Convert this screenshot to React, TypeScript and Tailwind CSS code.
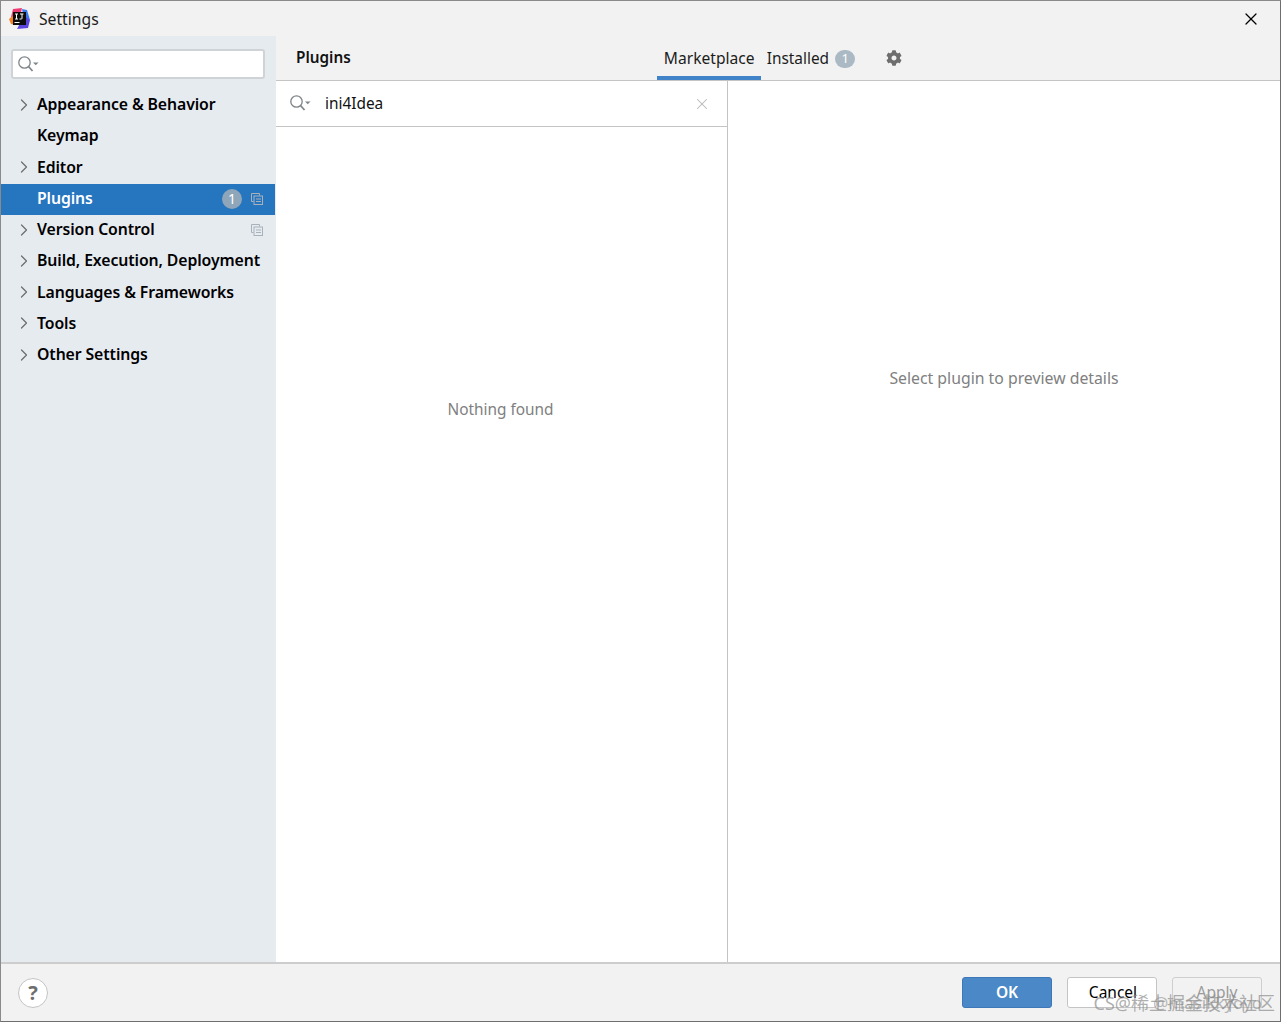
import React from "react";
import { ChevronRight, X } from "lucide-react";
import { FaCog } from "react-icons/fa";

const FONT = { fontFamily: '"Noto Sans", "Noto Sans CJK SC", sans-serif' };

const rows = [
  { label: "Appearance & Behavior", arrow: true },
  { label: "Keymap" },
  { label: "Editor", arrow: true },
  { label: "Plugins", selected: true, badge: true, copy: true },
  { label: "Version Control", arrow: true, copy: true },
  { label: "Build, Execution, Deployment", arrow: true },
  { label: "Languages & Frameworks", arrow: true },
  { label: "Tools", arrow: true },
  { label: "Other Settings", arrow: true },
];

function SearchIcon() {
  return (
    <svg width="21" height="17" viewBox="0 0 21 17" fill="none" className="shrink-0">
      <circle cx="6.5" cy="6.5" r="5.7" stroke="#7f8589" strokeWidth="1.3" />
      <path d="M10.500 10.500L14.500 15" stroke="#7f8589" strokeWidth="1.8" />
      <path d="M15 6.500h5.500l-2.750 2.750z" fill="#7f8589" />
    </svg>
  );
}

function CopyIcon() {
  return (
    <svg width="12" height="12" viewBox="0 0 12 12" fill="none" className="shrink-0">
      <path d="M8.500 2.500V0.500H0.500V8.500H2.500" stroke="#a9b2b9" strokeWidth="1" />
      <rect x="3" y="3" width="8.500" height="8.500" stroke="#a9b2b9" strokeWidth="1" />
      <path d="M5 6h5M5 8.500h5" stroke="#a9b2b9" strokeWidth="1" />
    </svg>
  );
}

function IdeaLogo() {
  return (
    <svg width="21" height="21" viewBox="0 0 21 21" className="shrink-0">
      <path d="M4 1L13 0L11 9L2 9z" fill="#ee3a72" />
      <path d="M13 1L18 2L21 12L15 11z" fill="#3b78ea" />
      <path d="M15 8L21 12L19 20L8 21z" fill="#5b45de" />
      <path d="M0 11L5 7L6 17L2 16z" fill="#f5821f" />
      <rect x="4" y="4" width="13" height="13" fill="#0c0c0c" />
      <rect x="5.500" y="14" width="5" height="1" fill="#fff" />
      <path d="M6 6h3M7.500 6v5M6 11h3M11 6h3.500M13 6v4.500q0 .5-1 .5h-1.500" stroke="#fff" strokeWidth="1" fill="none" />
    </svg>
  );
}

export default function App() {
  return (
    <div
      className="relative flex h-[1022px] w-[1281px] flex-col overflow-hidden border border-b-[#6e6e6e] border-l-[#8a8a8a] border-r-[#6e6e6e] border-t-[#8a8a8a] bg-[#f2f2f2] text-black"
      style={FONT}
    >
      {/* Title bar */}
      <div className="flex h-[35px] shrink-0 items-center pl-[8px] pr-[19px]">
        <IdeaLogo />
        <span className="ml-[9px] text-[15.7px] leading-[22px] text-[#1c1c1c]">Settings</span>
        <X className="ml-auto h-[20px] w-[20px] text-black" strokeWidth={1.5} />
      </div>

      <div className="flex min-h-0 flex-1">
        {/* Sidebar */}
        <div className="w-[275px] shrink-0 border-r border-[#e6ebf0] bg-[#e6ebf0]">
          <div className="mx-[10px] mt-[13px] flex h-[30px] w-[254px] items-center rounded-[3px] border-2 border-[#d0d3d5] bg-white pl-[5px]">
            <SearchIcon />
          </div>
          <div className="mt-[11px]">
            {rows.map((row) => (
              <div
                key={row.label}
                className={`flex h-[31.25px] items-center pr-[12px] ${row.selected ? "bg-[#2675bf] text-white" : "text-black"}`}
              >
                <div className="flex w-[36px] shrink-0 justify-start pl-[13px]">
                  {row.arrow && <ChevronRight className="-mt-[2px] h-[20px] w-[20px] text-[#6e6e6e]" strokeWidth={1.5} />}
                </div>
                <span className="-mt-[1px] whitespace-nowrap text-[15.8px] font-semibold leading-none tracking-[-0.1px]">{row.label}</span>
                <div className="-mt-[1px] ml-auto flex items-center gap-[9px]">
                  {row.badge && (
                    <span className="flex h-[20px] w-[20px] items-center justify-center rounded-full bg-[#8fa5b9] text-[14px] leading-none text-white">
                      1
                    </span>
                  )}
                  {row.copy && <CopyIcon />}
                </div>
              </div>
            ))}
          </div>
        </div>

        {/* Main */}
        <div className="flex min-w-0 flex-1 flex-col">
          <div className="flex h-[45px] shrink-0 items-stretch border-b border-[#c4c4c4] pl-[20px]">
            <span className="mt-[10px] text-[15.3px] font-semibold leading-[22px] text-[#111]">Plugins</span>
            <div className="ml-[306px] flex h-[44px] w-[104px] items-center justify-center border-b-[4px] border-[#4083c9] pl-[1px] pt-[5px] text-[15.6px] text-[#1c1c1c]">
              Marketplace
            </div>
            <div className="ml-[6px] flex items-center pt-[1px] text-[15.4px] text-[#1c1c1c]">
              Installed
              <span className="ml-[6px] flex h-[18px] w-[20px] items-center justify-center rounded-full bg-[#abb9c4] text-[13px] leading-none text-white">
                1
              </span>
            </div>
            <div className="ml-[31px] flex items-center pb-[1px]">
              <FaCog className="h-[16px] w-[16px] text-[#6e6e6e]" />
            </div>
          </div>

          <div className="flex min-h-0 flex-1 bg-white">
            <div className="flex w-[452px] shrink-0 flex-col border-r border-[#c4c4c4]">
              <div className="flex h-[46px] shrink-0 items-center border-b border-[#c4c4c4] pl-[14px] pr-[16px]">
                <SearchIcon />
                <span className="ml-[14px] text-[15.4px] text-[#111]">ini4Idea</span>
                <X className="ml-auto h-[18px] w-[18px] text-[#b4b8bb]" strokeWidth={1.4} />
              </div>
              <div className="pr-[2px] pt-[272px] text-center text-[15.4px] leading-[22px] text-[#808080]">Nothing found</div>
            </div>
            <div className="flex-1 pt-[286px] text-center text-[15.8px] leading-[22px] text-[#808080]">
              Select plugin to preview details
            </div>
          </div>
        </div>
      </div>

      {/* Footer */}
      <div className="flex h-[59px] shrink-0 items-center border-t-2 border-[#cdcdcd] pl-[17px] pr-[18px]">
        <div className="flex h-[30px] w-[30px] items-center justify-center rounded-full border border-[#c4c4c4] bg-white text-[20px] font-bold leading-none text-[#6e6e6e]">
          ?
        </div>
        <button className="ml-auto flex h-[31px] w-[90px] items-center justify-center rounded-[3px] border border-[#3d77b8] bg-[#4a88c7] pt-[1px] text-[15.5px] font-semibold text-white">
          OK
        </button>
        <button className="ml-[15px] flex h-[31px] w-[90px] items-center justify-center rounded-[3px] border border-[#c4c4c4] bg-white pl-[2px] pt-[1px] text-[15.5px] text-black">
          Cancel
        </button>
        <button className="ml-[15px] flex h-[31px] w-[90px] items-center justify-center rounded-[3px] border border-[#cfcfcf] bg-[#f2f2f2] pt-[1px] text-[15.5px] text-[#9a9a9a]">
          Apply
        </button>
      </div>

      {/* Watermark */}
      <div className="absolute bottom-[7px] right-[5px] whitespace-nowrap text-[18px] leading-[22px] text-[#8c8c8c]/70">
        CS@稀土掘金技术社区
      </div>
      <div className="absolute bottom-[7px] right-[18px] whitespace-nowrap text-[17px] leading-[22px] text-[#8c8c8c]/60">
        @masikkyoyo
      </div>
    </div>
  );
}
